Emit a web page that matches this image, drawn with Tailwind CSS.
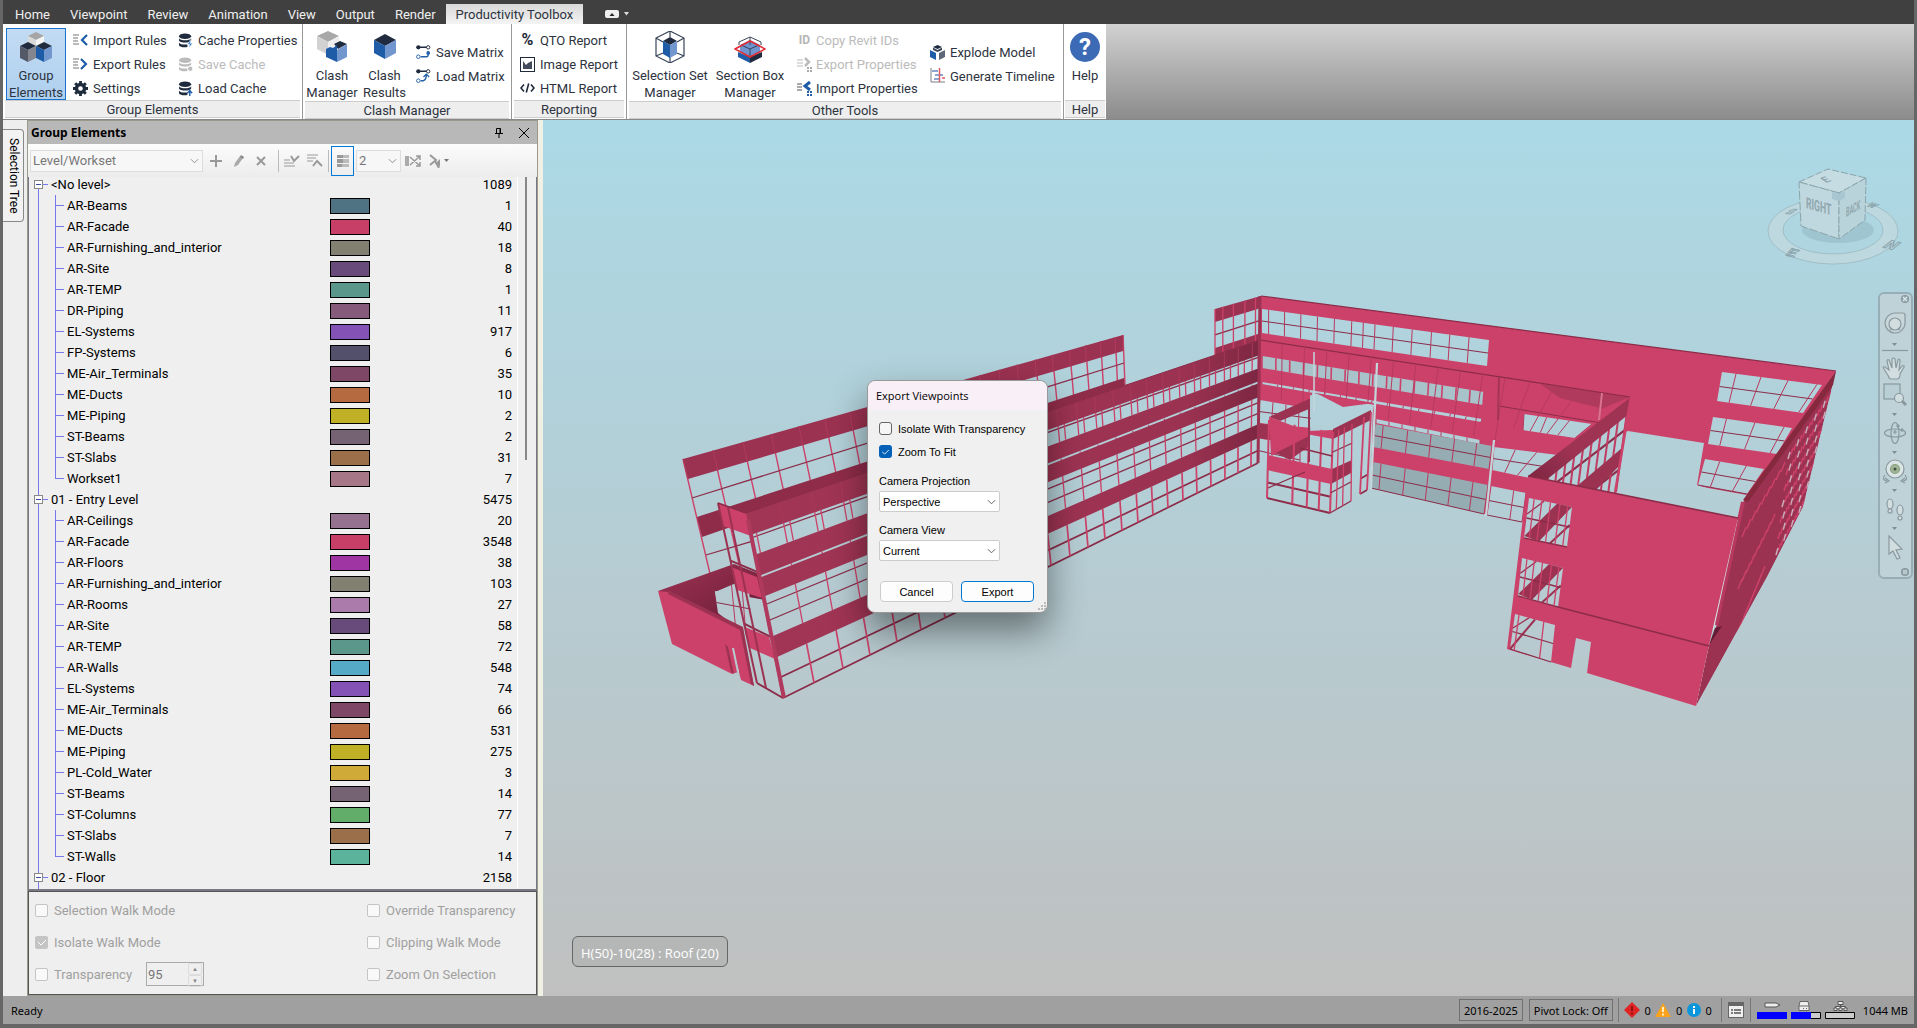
<!DOCTYPE html>
<html lang="en">
<head>
    <meta charset="UTF-8">
    <meta name="viewport" content="width=device-width, initial-scale=1.0">
    <title>Productivity Toolbox</title>
    <script src="https://cdn.jsdelivr.net/npm/@tailwindcss/browser@4"></script>
</head>
<body class="h-screen overflow-hidden flex flex-col bg-[#666] border-x-3 border-b-4 border-[#666] font-[Roboto,sans-serif] text-[13px] leading-[17px] text-[#2d3340]">

    <!-- Shared symbols -->
    <svg class="hidden">
        <symbol id="db" viewBox="0 0 16 16">
            <ellipse cx="7" cy="3.500" rx="6.500" ry="3" />
            <path d="M.5 5.500c1 3 12 3 13 0v2.500c-1 3-12 3-13 0zM.5 10c1 3 8 2.500 9 2v3c-4 .8-8 0-9-2z" />
        </symbol>
        <symbol id="matrix" viewBox="0 0 16 16">
            <path d="M2 3h12" stroke="#1f2a3c" stroke-width="1.500" />
            <circle cx="2.500" cy="3" r="2.300" fill="#1f2a3c" />
            <circle cx="13" cy="3" r="1.800" fill="#fff" stroke="#1f2a3c" />
            <circle cx="2.500" cy="13" r="1.900" fill="#fff" stroke="#2460a8" />
        </symbol>
        <symbol id="chev" viewBox="0 0 10 6">
            <path d="M1 1l4 4 4-4" fill="none" stroke="currentColor" />
        </symbol>
    </svg>

    <!-- Ribbon tabs -->
    <nav class="flex h-6 shrink-0 items-end bg-[#404040] pl-[2px] text-[#f0f0f0]">
        <a href="#" class="h-5 px-[10px] leading-[22px]">Home</a>
        <a href="#" class="h-5 px-[10px] leading-[22px]">Viewpoint</a>
        <a href="#" class="h-5 px-[10px] leading-[22px]">Review</a>
        <a href="#" class="h-5 px-[10px] leading-[22px]">Animation</a>
        <a href="#" class="h-5 px-[10px] leading-[22px]">View</a>
        <a href="#" class="h-5 px-[10px] leading-[22px]">Output</a>
        <a href="#" class="h-5 px-[10px] leading-[22px]">Render</a>
        <a href="#" class="h-5 bg-linear-to-b from-[#d8d8d8] to-[#f4f4f4] px-[10px] leading-[22px] text-[#2d3340]">Productivity Toolbox</a>
        <button class="ml-[22px] flex h-5 items-center gap-[5px]" aria-label="Minimize ribbon">
            <svg class="w-[14px] h-2" viewBox="0 0 14 8"><rect width="14" height="8" rx="2" fill="#eee" /><path d="M4.500 6L7 3l2.500 3z" fill="#222" /></svg>
            <svg class="w-[5px] h-1" viewBox="0 0 5 4"><path d="M0 0h5L2.500 3.500z" fill="#ddd" /></svg>
        </button>
    </nav>

    <!-- Ribbon panels -->
    <header class="flex h-24 shrink-0 bg-linear-to-b from-[#d2d2d2] to-[#8c8c8c] border-b border-[#888]">
        <section class="flex w-[300px] flex-col border-r border-[#999] bg-white">
            <div class="flex flex-1 pl-[3px] pt-1">
                <button class="flex h-[72px] w-[60px] flex-col items-center border border-[#1a73cc] bg-linear-to-b from-[#c3dbf3] to-[#aed0ef]">
                    <svg class="mt-[3px] h-8 w-8 shrink-0" viewBox="0 0 32 32">
                        <path d="M8 4l8-4 8 4-8 4z" fill="#a5a5a5" /><path d="M8 4l8 4v8l-8-4z" fill="#d9d9d9" /><path d="M24 4l-8 4v8l8-4z" fill="#f4f4f4" />
                        <path d="M0 14l8-4 8 4-8 4zM16 14l8-4 8 4-8 4z" fill="#202b3f" />
                        <path d="M0 14l8 4v12l-8-4z" fill="#545968" /><path d="M16 14l-8 4v12l8-4z" fill="#84868f" />
                        <path d="M16 14l8 4v12l-8-4z" fill="#1f5ca8" /><path d="M32 14l-8 4v12l8-4z" fill="#7297cf" />
                    </svg>
                    <span class="mt-[3px]">Group<br>Elements</span>
                </button>
                <div class="ml-[7px] flex w-[105px] flex-col">
                    <button class="flex h-6 items-center gap-[5px]"><svg class="h-[14px] w-[15px]" viewBox="0 0 15 14" fill="none"><path d="M0 2h6M0 5h5M0 8h5M0 11h6" stroke="#777" /><path d="M14 2L9 7l5 5" stroke="#1f5ca8" stroke-width="2.200" /></svg>Import Rules</button>
                    <button class="flex h-6 items-center gap-[5px]"><svg class="h-[14px] w-[15px]" viewBox="0 0 15 14" fill="none"><path d="M0 2h6M0 5h5M0 8h5M0 11h6" stroke="#777" /><path d="M8 2l5 5-5 5" stroke="#1f5ca8" stroke-width="2.200" /></svg>Export Rules</button>
                    <button class="flex h-6 items-center gap-[5px]"><svg class="h-[15px] w-[15px]" viewBox="0 0 16 16"><circle cx="8" cy="8" r="4.300" fill="none" stroke="#1f2a3c" stroke-width="3.600" /><path d="M8 0v3M8 13v3M0 8h3M13 8h3M2.300 2.300l2 2M11.700 11.700l2 2M13.700 2.300l-2 2M2.300 13.700l2-2" stroke="#1f2a3c" stroke-width="3" /></svg>Settings</button>
                </div>
                <div class="flex flex-col">
                    <button class="flex h-6 items-center gap-1"><svg class="h-[15px] w-4" viewBox="0 0 16 16"><use href="#db" fill="#1f2a3c" /><path d="M13 7l-3.500 5H12l-1 4 4-5h-2.500z" fill="#2f78c4" stroke="#fff" stroke-width=".5" /></svg>Cache Properties</button>
                    <button class="flex h-6 items-center gap-1 text-[#bbb]" disabled><svg class="h-[15px] w-4" viewBox="0 0 16 16"><use href="#db" fill="#bbb" /><circle cx="12.500" cy="12.500" r="2.800" fill="#bbb" stroke="#fff" /></svg>Save Cache</button>
                    <button class="flex h-6 items-center gap-1"><svg class="h-[15px] w-4" viewBox="0 0 16 16"><use href="#db" fill="#1f2a3c" /><path d="M12 16v-5M9.500 13l2.500-3 2.500 3" fill="none" stroke="#2460a8" stroke-width="1.500" /></svg>Load Cache</button>
                </div>
            </div>
            <h2 class="mx-[2px] h-[18px] border-y border-[#ccc] bg-[#eee] text-center leading-[17px] mb-[1px]">Group Elements</h2>
        </section>

        <section class="flex w-[209px] flex-col border-r border-[#999] bg-white">
            <div class="flex flex-1 pl-[3px] pt-1">
                <button class="flex w-[52px] flex-col items-center">
                    <svg class="mt-[3px] h-8 w-8 shrink-0" viewBox="0 0 32 32">
                        <path d="M1 5l11-5 11 5-11 6z" fill="#a8a8a8" /><path d="M1 5l11 6v13L1 18z" fill="#d2d2d2" /><path d="M23 5l-11 6v13l6-3v-8l5-3z" fill="#eee" />
                        <path d="M18 13l6-3 7 3-9 5z" fill="#202b3f" /><path d="M10 18l4-2 3 1 4-3v17L10 26z" fill="#1f5ca8" /><path d="M31 13l-10 6v12l10-5z" fill="#7297cf" />
                    </svg>
                    <span class="mt-1">Clash<br>Manager</span>
                </button>
                <button class="flex w-[53px] flex-col items-center">
                    <svg class="mt-[3px] h-8 w-8 shrink-0" viewBox="0 0 32 32"><path d="M5 9l11-6 11 6-11 6z" fill="#202b3f" /><path d="M5 9l11 6v13L5 22z" fill="#1f5ca8" /><path d="M27 9l-11 6v13l11-6z" fill="#7297cf" /></svg>
                    <span class="mt-1">Clash<br>Results</span>
                </button>
                <div class="ml-[5px] flex flex-col pt-3">
                    <button class="flex h-6 items-center gap-[5px]"><svg class="h-4 w-[15px]" viewBox="0 0 16 16"><use href="#matrix" /><path d="M5 13h6a2 2 0 0 0 2-2V8" fill="none" stroke="#2460a8" stroke-width="1.500" /><circle cx="13" cy="9" r="2" fill="#2460a8" /></svg>Save Matrix</button>
                    <button class="flex h-6 items-center gap-[5px]"><svg class="h-4 w-[15px]" viewBox="0 0 16 16"><use href="#matrix" /><path d="M5 13h3q3-1 3-6M8 9l3-3 3 3" fill="none" stroke="#2460a8" stroke-width="1.500" /></svg>Load Matrix</button>
                </div>
            </div>
            <h2 class="mx-[2px] h-[18px] border-y border-[#ccc] bg-[#eee] text-center leading-[17px] mb-[1px]">Clash Manager</h2>
        </section>

        <section class="flex w-[115px] flex-col border-r border-[#999] bg-white">
            <div class="flex flex-1 flex-col pl-[8px] pt-1">
                <button class="flex h-6 items-center gap-[5px]"><span class="w-[15px] text-base font-bold text-[#1f2a3c]">%</span>QTO Report</button>
                <button class="flex h-6 items-center gap-[5px]"><svg class="h-[15px] w-[15px]" viewBox="0 0 15 15"><rect x=".5" y=".5" width="14" height="14" fill="#fff" stroke="#1f2a3c" /><path d="M3 12V4l3 4 2-2 4-2v8z" fill="#444b5a" /></svg>Image Report</button>
                <button class="flex h-6 items-center gap-[5px]"><svg class="h-[10px] w-[15px]" viewBox="0 0 15 10" fill="none" stroke="#1f2a3c" stroke-width="1.600"><path d="M4 1.500L1 5l3 3.500M11 1.500L14 5l-3 3.500M8.700.5l-2.400 9" /></svg>HTML Report</button>
            </div>
            <h2 class="mx-[2px] h-[18px] border-y border-[#ccc] bg-[#eee] text-center leading-[17px] mb-[1px]">Reporting</h2>
        </section>

        <section class="flex w-[437px] flex-col border-r border-[#999] bg-white">
            <div class="flex flex-1 pl-[3px] pt-1">
                <button class="flex w-[80px] flex-col items-center">
                    <svg class="mt-[3px] h-8 w-8 shrink-0" viewBox="0 0 32 32">
                        <path d="M2 7l14-7 14 7v18l-14 7-14-7zM16 0v6M2 7l7 4M30 7l-7 4M2 25l7-3M30 25l-7-3M16 32v-6" fill="none" stroke="#39455a" stroke-width="1.200" />
                        <path d="M9 10l7-4 7 4-7 4z" fill="#202b3f" /><path d="M9 10l7 4v13l-7-4z" fill="#1f5ca8" /><path d="M23 10l-7 4v13l7-4z" fill="#7297cf" />
                    </svg>
                    <span class="mt-1 whitespace-nowrap">Selection Set<br>Manager</span>
                </button>
                <button class="flex w-[80px] flex-col items-center">
                    <svg class="mt-[3px] h-8 w-8 shrink-0" viewBox="0 0 32 32">
                        <path d="M4 21l12 5v6L4 26z" fill="#1f5ca8" /><path d="M28 21l-12 5v6l12-6z" fill="#202b3f" />
                        <path d="M6 14l10-5 10 5v7l-10 5-10-5z" fill="#6f94cf" /><path d="M5 14V11l11-5 11 5v3M16 6v8M16 18v8M7 14l9 4 9-4" fill="none" stroke="#39455a" />
                        <path d="M1 18l15-8 15 8-15 8z" fill="none" stroke="#e02b33" stroke-width="1.600" />
                    </svg>
                    <span class="mt-1 whitespace-nowrap">Section Box<br>Manager</span>
                </button>
                <div class="ml-[7px] flex w-[133px] flex-col">
                    <button class="flex h-6 items-center gap-1 text-[#bbb]" disabled><span class="w-[15px] text-xs font-bold text-[#b5b5b5]">ID</span>Copy Revit IDs</button>
                    <button class="flex h-6 items-center gap-1 text-[#bbb]" disabled><svg class="h-4 w-[15px]" viewBox="0 0 15 16" fill="none"><path d="M0 4h6M0 7h6M0 10h6" stroke="#bbb" /><path d="M8 2l4 4-4 4" stroke="#bbb" stroke-width="2.500" /><path d="M10 12h5M10 15h5" stroke="#aaa" stroke-width="2" stroke-dasharray="2 1" /></svg>Export Properties</button>
                    <button class="flex h-6 items-center gap-1"><svg class="h-4 w-[15px]" viewBox="0 0 15 16" fill="none"><path d="M0 4h5M0 7h5M0 10h5" stroke="#555" /><path d="M13 2L8 6l5 4" stroke="#1f5ca8" stroke-width="3" /><path d="M10 12h5M10 15h5" stroke="#2460a8" stroke-width="2" stroke-dasharray="2 1" /></svg>Import Properties</button>
                </div>
                <div class="flex flex-col pt-3">
                    <button class="flex h-6 items-center gap-[5px]"><svg class="h-4 w-[15px]" viewBox="0 0 15 16"><path d="M3 3l4.500-2L12 3 7.500 5z" fill="#202b3f" /><path d="M3 3.500L7.500 6v2L3 6zM12 3.500L7.500 6v2L12 6z" fill="#39455a" /><path d="M0 6l6 3v7l-6-3z" fill="#1f5ca8" /><path d="M15 6L9 9v7l6-3z" fill="#5f6878" /></svg>Explode Model</button>
                    <button class="flex h-6 items-center gap-[5px]"><svg class="h-4 w-[15px]" viewBox="0 0 15 16" fill="none"><path d="M1 0v14h14" stroke="#7a7f88" /><path d="M2 3h6M5 7h8M4 11h5" stroke="#8ba6d2" stroke-width="2" /><path d="M9.500 0v14M12 10h3" stroke="#dd5b61" stroke-width="1.500" /></svg>Generate Timeline</button>
                </div>
            </div>
            <h2 class="mx-[2px] h-[18px] border-y border-[#ccc] bg-[#eee] text-center leading-[17px] mb-[1px]">Other Tools</h2>
        </section>

        <section class="flex w-[42px] flex-col bg-white">
            <div class="flex flex-1 justify-center pt-1">
                <button class="flex flex-col items-center">
                    <span class="mt-[3px] flex h-8 w-8 items-center justify-center"><span class="h-[30px] w-[30px] rounded-full bg-[#3c6ab4] text-2xl leading-[30px] font-bold text-white">?</span></span>
                    <span class="mt-1">Help</span>
                </button>
            </div>
            <h2 class="mx-[1px] h-[18px] border-y border-[#ccc] bg-[#eee] text-center leading-[17px] mb-[1px]">Help</h2>
        </section>
    </header>

    <main class="flex min-h-0 flex-1">
        <!-- Docked side tab -->
        <div class="w-6 shrink-0 bg-[#eee] pt-[9px]">
            <button class="h-[93px] w-[21px] rounded-r border border-l-0 border-[#888] bg-[#f2f2f2] text-[12px] text-black [writing-mode:vertical-rl]">Selection Tree</button>
        </div>

        <!-- Group Elements panel -->
        <aside class="flex w-[511px] shrink-0 flex-col border border-[#99998c] bg-[#efefef] text-black">
            <div class="flex h-[23px] shrink-0 items-center bg-[#b8b8b8] pl-[3px] pr-2">
                <h1 class="flex-1 font-['Noto_Sans',sans-serif] text-[12px] font-bold">Group Elements</h1>
                <button class="mr-4" aria-label="Pin"><svg class="h-[10px] w-2" viewBox="0 0 8 10" fill="none" stroke="#000"><path d="M1.500 5.500v-5h4v5M0 5.500h8M4 5.500V10M5 .5v5" /></svg></button>
                <button aria-label="Close"><svg class="h-[10px] w-[10px]" viewBox="0 0 10 10" stroke="#000"><path d="M0 0l10 10M10 0L0 10" /></svg></button>
            </div>

            <div class="flex h-[33px] shrink-0 items-center bg-linear-to-b from-[#fcfcfc] to-[#ececec] pl-[2px] text-[#888]">
                <div class="relative">
                    <select aria-label="Grouping" class="h-[22px] w-[173px] appearance-none border border-[#ddd] bg-[#f7f7f7] pl-[2px] text-[#777]"><option>Level/Workset</option></select>
                    <svg class="pointer-events-none absolute right-1 top-2 h-[6px] w-[9px]"><use href="#chev" /></svg>
                </div>
                <div class="flex items-center gap-[11px] pl-[7px] pr-3">
                    <button aria-label="Add"><svg class="h-3 w-3" viewBox="0 0 12 12" stroke="#999" stroke-width="2"><path d="M6 0v12M0 6h12" /></svg></button>
                    <button aria-label="Edit"><svg class="h-3 w-3" viewBox="0 0 12 12"><path d="M7 1l3 2-5 7-4 2 1-4z" fill="#aaa" /><path d="M8 0l3 2-1 2-3-2z" fill="#888" /></svg></button>
                    <button aria-label="Delete"><svg class="h-[10px] w-[10px]" viewBox="0 0 10 10" stroke="#999" stroke-width="2"><path d="M1 1l8 8M9 1L1 9" /></svg></button>
                </div>
                <div class="flex items-center gap-[7px] border-x border-[#bbb] py-[3px] px-[5px]">
                    <button aria-label="Expand"><svg class="h-4 w-4" viewBox="0 0 16 16" fill="none" stroke="#999"><path d="M0 7h6M0 10h10M0 13h11" /><path d="M7 3l3 5 5-5" stroke-width="2" /></svg></button>
                    <button aria-label="Collapse"><svg class="h-4 w-4" viewBox="0 0 16 16" fill="none" stroke="#999"><path d="M0 2h11M0 5h9M0 8h6" /><path d="M6 13l4-5 5 5" stroke-width="2" /></svg></button>
                </div>
                <button aria-label="Color table" class="ml-[2px] flex h-[30px] w-[23px] items-center justify-center border border-[#0078d7]"><svg class="h-3 w-3" viewBox="0 0 12 12"><path d="M0 0h12v3H0zM0 4h12v4H0zM0 9h12v3H0z" fill="#bbb" /><path d="M0 0h6v3H0zM0 4h6v4H0zM0 9h5v3H0z" fill="#999" /></svg></button>
                <div class="relative ml-[2px]">
                    <select aria-label="Level depth" class="h-[22px] w-[45px] appearance-none border border-[#ddd] bg-[#f7f7f7] pl-[2px] text-[#777]"><option>2</option></select>
                    <svg class="pointer-events-none absolute right-1 top-2 h-[6px] w-[9px]"><use href="#chev" /></svg>
                </div>
                <button aria-label="Shuffle" class="ml-1"><svg class="h-3 w-4" viewBox="0 0 16 12" fill="none" stroke="#999"><path d="M5 2l9 8M5 10l9-8M11 1h4v4M11 11h4V7" stroke-width="1.500" /><path d="M0 1h4v3H0zM0 8h4v3H0zM0 4h4v4H0z" fill="#aaa" stroke="none" /></svg></button>
                <button aria-label="Reset" class="ml-2 flex items-center gap-[3px]"><svg class="h-[14px] w-3" viewBox="0 0 12 14"><path d="M1 1l6 5-6 5M6 7l4 7" fill="none" stroke="#999" stroke-width="2" /><path d="M11 5v8l-4-4z" fill="#999" /></svg><svg class="h-[3px] w-[5px]" viewBox="0 0 5 3"><path d="M0 0h5L2.500 3z" fill="#777" /></svg></button>
            </div>

            <div class="flex min-h-0 flex-1 overflow-hidden border-x border-b-2 border-[#777785]">
                <ul id="tree" class="relative flex-1 border-r border-white"></ul>
                <div class="w-[18px]"><div class="ml-[7px] h-[283px] w-[2px] bg-[#888]"></div></div>
            </div>

            <form class="grid h-[104px] shrink-0 grid-cols-[332px_1fr] grid-rows-3 items-center border border-[#555] pb-1 pt-[2px] pl-[6px] text-[#a0a0a0]">
                <label class="flex items-center gap-[6px]"><input type="checkbox" disabled class="h-[13px] w-[13px] appearance-none rounded-xs border border-[#c4c4c4] bg-[#f9f9f9]">Selection Walk Mode</label>
                <label class="flex items-center gap-[6px]"><input type="checkbox" disabled class="h-[13px] w-[13px] appearance-none rounded-xs border border-[#c4c4c4] bg-[#f9f9f9]">Override Transparency</label>
                <label class="relative flex items-center gap-[6px]"><input type="checkbox" checked disabled class="h-[13px] w-[13px] appearance-none rounded-xs bg-[#c4c4c4]"><svg class="absolute left-[3px] h-[7px] w-2" viewBox="0 0 8 7"><path d="M0 3l3 3 5-5" fill="none" stroke="#fff" /></svg>Isolate Walk Mode</label>
                <label class="flex items-center gap-[6px]"><input type="checkbox" disabled class="h-[13px] w-[13px] appearance-none rounded-xs border border-[#c4c4c4] bg-[#f9f9f9]">Clipping Walk Mode</label>
                <div class="flex items-center">
                    <label class="flex w-[111px] items-center gap-[6px]"><input type="checkbox" disabled class="h-[13px] w-[13px] appearance-none rounded-xs border border-[#c4c4c4] bg-[#f9f9f9]">Transparency</label>
                    <div class="flex h-6 w-[58px] border border-[#aaa] pr-[1px]">
                        <input type="text" value="95" disabled aria-label="Transparency value" class="w-[41px] pl-[1px] text-[#777]">
                        <div class="flex flex-1 flex-col text-[6px] leading-[10px] text-[#888]">
                            <button type="button" class="flex-1 rounded-xs border border-[#ddd]" aria-label="Increase">▲</button>
                            <button type="button" class="flex-1 rounded-xs border border-[#ddd]" aria-label="Decrease">▼</button>
                        </div>
                    </div>
                </div>
                <label class="flex items-center gap-[6px]"><input type="checkbox" disabled class="h-[13px] w-[13px] appearance-none rounded-xs border border-[#c4c4c4] bg-[#f9f9f9]">Zoom On Selection</label>
            </form>
        </aside>
        <div class="w-[5px] shrink-0 bg-[#f1f0e4]"></div>

        <!-- 3D view -->
        <div class="relative min-w-0 flex-1 overflow-hidden bg-linear-to-b from-[#abd9e6] to-[#c0c0c0]">
            <svg id="model" class="absolute inset-0 h-full w-full" viewBox="543 120 1371 876" preserveAspectRatio="xMinYMin slice">
                <defs>
                    <linearGradient id="sky" gradientUnits="userSpaceOnUse" x1="0" y1="120" x2="0" y2="996"><stop stop-color="#abd9e6" /><stop offset="1" stop-color="#c0c0c0" /></linearGradient>
                    <linearGradient id="shade" x1="0" y1="1" x2="1" y2="0"><stop stop-color="#7c2541" /><stop offset="0.400" stop-color="#9f3354" /></linearGradient>
                    <linearGradient id="deep" x1="0" y1="0" x2="1" y2="1"><stop stop-color="#a03354" /><stop offset="1" stop-color="#641b35" /></linearGradient>
                    <linearGradient id="long" x1="0" y1="0" x2="1" y2="0"><stop stop-color="#a13555" /><stop offset="0.850" stop-color="#9c3252" /><stop offset="1" stop-color="#7d2742" /></linearGradient>
                    <clipPath id="outer"><path d="M1836 371L1803 507L1767 577L1696 706L1709 645L1716 627L1743 502z" /></clipPath>
                </defs>
                <rect x="543" y="120" width="1371" height="876" fill="url(#sky)" />
                <g id="building"></g>

                <!-- View cube -->
                <g stroke="#8ba5ad" fill="#bed8df">
                    <path fill-rule="evenodd" d="M1768 231a65 33 0 1 0 130 0a65 33 0 1 0-130 0zM1783 230a50 24 0 1 0 100 0a50 24 0 1 0-100 0z" stroke-opacity=".5" />
                    <ellipse cx="1838" cy="230" rx="36" ry="13" fill="#8fb4bf" stroke="none" opacity=".5" />
                    <path d="M1799 182l29-13 38 9-27 15z" fill="#c5dce2" stroke-dasharray="7 2" />
                    <path d="M1799 182l40 11v46l-38-13z" fill="#bfd8df" stroke-dasharray="9 2" />
                    <path d="M1866 178l-27 15v46l26-19z" fill="#b9d3da" stroke-dasharray="7 2" />
                    <path d="M1832 192l7 2 6-3v7l-6 3-7-2z" fill="#a7c6d1" stroke="none" />
                    <g fill="#91a6ae" stroke="none" font-family="Roboto" font-weight="bold" font-size="14">
                        <text transform="matrix(.62 .18 0 1.100 1806 208)">RIGHT</text>
                        <text transform="matrix(.42 -.24 0 1 1846 217)" font-size="13">BACK</text>
                        <text transform="matrix(.8 -.3 .7 .5 1826 183)" font-size="13">E</text>
                        <text transform="matrix(1.100 .3 -.6 .7 1785 255)" fill="#bed8df" stroke="#8ba5ad">E</text>
                        <text transform="matrix(1.100 .3 -.9 .7 1882 247)" fill="#bed8df" stroke="#8ba5ad">N</text>
                        <text transform="matrix(.9 0 -.7 .5 1784 214)" fill="#bed8df" stroke="#8ba5ad">S</text>
                        <text transform="matrix(.7 .2 -.7 .4 1866 206)" fill="#bed8df" stroke="#8ba5ad" font-size="12">W</text>
                    </g>
                </g>
            </svg>

            <!-- Navigation bar -->
            <div class="absolute right-[1px] top-[172px] flex w-[35px] flex-col items-center rounded-md border-2 border-[#98aeb6] bg-[#bfd2d8] h-[287px]">
                <svg class="w-[31px] h-[283px]" viewBox="1881 294 31 283" fill="#d2dde0" stroke="#8999a0" stroke-width="1.200">
                    <g><circle cx="1906" cy="299" r="3.500" fill="#94a7ae" /><path d="M1904 297l4 4M1908 297l-4 4" stroke="#dde6e9" /></g>
                    <path d="M1896 313h8q2 0 2 2v9a10 10 0 1 1-10-11z" fill="#c8d5d9" /><circle cx="1896" cy="324" r="6" /><path d="M1891 330l2-2M1901 330l-2-2" />
                    <path d="M1883 350.500h26" />
                    <path d="M1890 377l-5-8q-2-3 1-2l4 3-2-9q0-2 2-1l3 8v-9q1-2 3 0l1 9 2-8q2-2 2 1l-1 9 3-4q3-1 2 1l-4 7q0 5-3 5h-6q-3-1-2-2z" />
                    <rect x="1885" y="384" width="16" height="15" fill="#b8cfd6" /><circle cx="1900" cy="398" r="4.500" /><path d="M1903 401l4 4" stroke-width="3" />
                    <g fill="none"><ellipse cx="1896" cy="433" rx="10.500" ry="4" /><ellipse cx="1896" cy="433" rx="4" ry="10.500" /><path d="M1896 430v4M1894 432h4M1899 424v4M1897 426h4M1903 428v4M1901 430h4" /></g>
                    <path d="M1886 475q-4 5 2 6M1906 475q4 5-2 6M1886 478l4 3-4 2M1906 478l-4 3 4 2" fill="none" /><circle cx="1896" cy="469" r="9" fill="#dce5e6" /><circle cx="1896" cy="469" r="4.500" fill="#a0b494" stroke="#8aa283" /><circle cx="1896" cy="469" r="1.500" fill="#435247" stroke="none" />
                    <ellipse cx="1891" cy="504" rx="3" ry="5" /><circle cx="1891" cy="511" r="2" /><ellipse cx="1901" cy="510" rx="3" ry="5" /><circle cx="1901" cy="518" r="2" />
                    <path d="M1890 536v18l4-3 4 8 3-1-4-8 6-1z" />
                    <path d="M1893 343h5l-2.500 3zM1893 413h5l-2.500 3zM1893 451h5l-2.500 3zM1893 489h5l-2.500 3zM1893 527h5l-2.500 3z" fill="#7d8e95" stroke="none" />
                    <circle cx="1906" cy="572" r="3.500" fill="#94a7ae" /><path d="M1904 571h4M1904 573h4" stroke="#dde6e9" />
                </svg>
            </div>

            <p class="absolute bottom-[29px] left-[29px] rounded-md border border-[#666] bg-[#b5b7b7] px-2 pb-[4px] pt-2 font-['Open_Sans',sans-serif] text-white">H(50)-10(28) : Roof (20)</p>

            <!-- Export dialog -->
            <div role="dialog" aria-labelledby="dlg-title" class="absolute left-[324px] top-[260px] w-[181px] overflow-visible rounded-lg border border-[#999] bg-[#f0f0f0] font-['Liberation_Sans',Arial,sans-serif] text-[11px] leading-4 text-black shadow-[0_18px_36px_rgba(0,0,0,0.45)]">
                <h2 id="dlg-title" class="rounded-t-lg bg-[#f9eff7] px-2 pb-[6px] pt-[7px] font-['Open_Sans',sans-serif]">Export Viewpoints</h2>
                <form class="px-[11px] pb-[10px] pt-[10px]">
                    <label class="flex h-[17px] items-center gap-[6px]"><input type="checkbox" class="h-[13px] w-[13px] appearance-none rounded-[3px] border border-[#666] bg-[#f6f6f6]">Isolate With Transparency</label>
                    <label class="relative mt-[6px] flex h-[17px] items-center gap-[6px]"><input type="checkbox" checked class="h-[13px] w-[13px] appearance-none rounded-[3px] bg-[#0560b8]"><svg class="absolute left-[3px] h-[6px] w-[7px]" viewBox="0 0 8 7"><path d="M0 3l3 3 5-5" fill="none" stroke="#fff" /></svg>Zoom To Fit</label>
                    <label for="proj" class="mt-[13px] block">Camera Projection</label>
                    <div class="relative mt-[2px] w-[121px]">
                        <select id="proj" class="block h-[21px] w-full appearance-none rounded-xs border border-[#ccc] bg-white pl-[3px]"><option>Perspective</option></select>
                        <svg class="pointer-events-none absolute right-1 top-2 h-[6px] w-[9px] text-[#555]"><use href="#chev" /></svg>
                    </div>
                    <label for="view" class="mt-[10px] block">Camera View</label>
                    <div class="relative mt-[2px] w-[121px]">
                        <select id="view" class="block h-[21px] w-full appearance-none rounded-xs border border-[#ccc] bg-white pl-[3px]"><option>Current</option></select>
                        <svg class="pointer-events-none absolute right-1 top-2 h-[6px] w-[9px] text-[#555]"><use href="#chev" /></svg>
                    </div>
                    <div class="mt-5 flex gap-2 pl-[1px]">
                        <button type="button" class="h-[21px] w-[73px] rounded border border-[#ccc] bg-[#fdfdfd]">Cancel</button>
                        <button type="button" class="h-[21px] w-[73px] rounded border border-[#0078d4] bg-[#fdfdfd]">Export</button>
                    </div>
                </form>
                <svg class="absolute bottom-[1px] right-[1px] h-[9px] w-[9px]" viewBox="0 0 9 9"><path d="M7 0h2v2H7zM4 3h2v2H4zM7 3h2v2H7zM1 6h2v2H1zM4 6h2v2H4zM7 6h2v2H7z" fill="#bbb" /></svg>
            </div>
        </div>
    </main>

    <!-- Status bar -->
    <footer class="flex h-7 shrink-0 items-center bg-[#a0a0a0] pl-2 pr-[6px] font-['Noto_Sans',sans-serif] text-[11px] text-black">
        <span class="flex-1">Ready</span>
        <span class="flex h-[22px] w-16 items-center justify-center whitespace-nowrap border border-[#707070]">2016-2025</span>
        <span class="ml-[6px] flex h-[22px] w-[84px] items-center justify-center whitespace-nowrap border border-[#707070]">Pivot Lock: Off</span>
        <div class="ml-[5px] flex h-6 w-[104px] items-center justify-between border-x border-[#777] pl-[5px] pr-[9px]">
            <svg class="h-4 w-4" viewBox="0 0 16 16"><path d="M8 0l8 8-8 8-8-8z" fill="#e02424" /><path d="M8 4v5M8 10.500v2" stroke="#8d1313" stroke-width="2" /></svg><span>0</span>
            <svg class="h-[14px] w-4" viewBox="0 0 16 14"><path d="M8 0l8 14H0z" fill="#faa21b" /><path d="M8 4v5M8 10.500v2" stroke="#fff0c0" stroke-width="2" /></svg><span>0</span>
            <svg class="h-[14px] w-[14px]" viewBox="0 0 14 14"><circle cx="7" cy="7" r="7" fill="#0b96dc" /><path d="M7 6v5M7 3v2" stroke="#fff" stroke-width="2" /></svg><span>0</span>
        </div>
        <button class="flex h-6 w-[29px] items-center justify-center border-r border-[#777]" aria-label="Sheet browser"><svg class="h-4 w-4" viewBox="0 0 16 16"><rect x=".5" y=".5" width="15" height="15" fill="#f0f0f0" stroke="#666" /><path d="M0 0h16v4H0z" fill="#666" /><path d="M3 8h2M6 8h7M3 11h2M6 11h7" stroke="#555" stroke-width="1.500" /></svg></button>
        <div class="ml-[6px] flex gap-1">
            <svg class="h-[18px] w-[30px]" viewBox="0 0 30 18"><path d="M8 2h11l4 2-4 2H8z" fill="#eee" stroke="#555" /><path d="M0 11h30v7H0z" fill="#00f" /></svg>
            <svg class="h-[18px] w-[30px]" viewBox="0 0 30 18"><path d="M9 .5h8l1 4v5H8v-5z" fill="#eee" stroke="#666" /><path d="M8 5h10M12 7.500h1M15 7.500h1" stroke="#666" /><path d="M.5 11.500h29v6H.5z" fill="#ccc" stroke="#000" /><path d="M0 11h20v7H0z" fill="#00f" /></svg>
            <svg class="h-[18px] w-[30px]" viewBox="0 0 30 18"><path d="M13 .5h5v3h-5zM9 7h3v2.500H9zM14 7h3v2.500h-3zM19 7h3v2.500h-3zM15.500 4v3M10.500 7V5.500h10V7" fill="#eee" stroke="#555" /><path d="M.5 11.500h29v6H.5z" fill="#ccc" stroke="#000" /></svg>
        </div>
        <span class="ml-2 whitespace-nowrap">1044 MB</span>
    </footer>

    <script>
        // Tree data: [level name, count, [[group, color, count], ...]]
        const levels = [
            ["<No level>", 1089, [["AR-Beams", "#4f7382", 1], ["AR-Facade", "#c73e66", 40], ["AR-Furnishing_and_interior", "#828071", 18], ["AR-Site", "#684a7b", 8], ["AR-TEMP", "#5b978b", 1], ["DR-Piping", "#855a7a", 11], ["EL-Systems", "#8452b5", 917], ["FP-Systems", "#53506b", 6], ["ME-Air_Terminals", "#7f4766", 35], ["ME-Ducts", "#b56a3f", 10], ["ME-Piping", "#bfb026", 2], ["ST-Beams", "#756273", 2], ["ST-Slabs", "#9b6f49", 31], ["Workset1", "#a67887", 7]]],
            ["01 - Entry Level", 5475, [["AR-Ceilings", "#957390", 20], ["AR-Facade", "#c73e66", 3548], ["AR-Floors", "#9f35a3", 38], ["AR-Furnishing_and_interior", "#828071", 103], ["AR-Rooms", "#ab7bac", 27], ["AR-Site", "#684a7b", 58], ["AR-TEMP", "#5b978b", 72], ["AR-Walls", "#55aac7", 548], ["EL-Systems", "#8452b5", 74], ["ME-Air_Terminals", "#7f4766", 66], ["ME-Ducts", "#b56a3f", 531], ["ME-Piping", "#bfb026", 275], ["PL-Cold_Water", "#d0aa39", 3], ["ST-Beams", "#756273", 14], ["ST-Columns", "#63ad6a", 77], ["ST-Slabs", "#9b6f49", 7], ["ST-Walls", "#5ab39a", 14]]],
            ["02 - Floor", 2158, []]
        ];

        document.getElementById("tree").innerHTML = levels.map(([name, total, groups]) => `
            <li class="relative">
                <span class="absolute left-[9px] top-[6px] bottom-[-6px] w-px bg-[#7777ee]"></span>
                <div class="relative -top-[3px] flex h-[21px] items-center pl-[5px] pr-[5px]">
                    <button class="flex h-[9px] w-[9px] items-center justify-center border border-[#888] bg-white" aria-label="Collapse"><span class="h-px w-[5px] bg-[#3a4aa0]"></span></button>
                    <span class="h-px w-[5px] bg-[#7777ee]"></span>
                    <span class="ml-[3px] flex-1">${name.replace("<", "&lt;").replace(">", "&gt;")}</span><span>${total}</span>
                </div>
                <ul>${groups.map(([group, color, count], i) => `
                    <li class="relative -top-[3px] grid h-[21px] grid-cols-[273px_40px_1fr] items-center pl-[28px] pr-[5px]">
                        <span class="absolute left-[26px] top-0 w-px bg-[#7777ee] ${i === groups.length - 1 ? "h-[10px]" : "h-[21px]"}"></span>
                        <span class="absolute left-[26px] top-[10px] h-px w-[9px] bg-[#7777ee]"></span>
                        <span class="pl-[10px]">${group}</span>
                        <span class="h-4 border border-black" style="background-color:${color}"></span>
                        <span class="text-right">${count}</span>
                    </li>`).join("")}
                </ul>
            </li>`).join("");

        // Building model
        const BRIGHT = "#cc4169", DARK = "#9c3252", EDGE = "#8b2c49", SKY = "url(#sky)";
        let out = "";
        const lerp = (a, b, t) => [a[0] + (b[0] - a[0]) * t, a[1] + (b[1] - a[1]) * t];
        const poly = (pts, fill) => { out += `<path d="M${pts.map(p => p.join(" ")).join("L")}z" fill="${fill}"/>`; };
        const line = (a, b, color, w = 1.3) => { out += `<path d="M${a.join(" ")}L${b.join(" ")}" stroke="${color}" stroke-width="${w}"/>`; };
        // quad is [top left, top right, bottom right, bottom left]
        const bars = (q, cols, rows, vcolor = BRIGHT, hcolor = EDGE, w = 1.3) => {
            rows.forEach(s => line(lerp(q[0], q[3], s), lerp(q[1], q[2], s), hcolor, w));
            cols.forEach(t => line(lerp(q[0], q[1], t), lerp(q[3], q[2], t), vcolor, w));
        };
        const pane = (q, cols, rows, fill = SKY, vcolor = "#b8385e", w = 1) => { poly(q, fill); bars(q, cols, rows, vcolor, EDGE, w); };
        const even = n => Array.from({ length: n + 1 }, (_, i) => i / n);

        // Back wall of the left wing
        const backCols = [130, 220, 310, 395, 478, 556, 630, 700, 768, 834, 898, 960, 1020, 1078, 1133, 1187, 1238, 1290, 1338, 1383, 1427, 1450].map(x => (x - 130) / 1320);
        bars([[683, 459], [1123, 335], [1125, 386], [711, 578]], backCols, [], BRIGHT, EDGE, 1.4);
        poly([[683, 459], [1123, 335], [1123, 351], [688, 479]], DARK);
        poly([[697, 517], [1124, 378], [1125, 390], [702, 537]], "#8f2c4a");
        line([692, 498], [1124, 363], EDGE);
        line([706, 555], [800, 527], EDGE);
        bars([[683, 459], [1123, 335], [1123, 351], [688, 479]], backCols, [], "#ad3a5d", EDGE, 1);

        // Low block at the left end
        poly([[658, 591], [734, 564], [762, 575], [765, 600], [715, 591], [719, 613], [742, 628]], "url(#deep)");
        pane([[715, 592], [748, 578], [753, 640], [718, 613]], [0.5, 0.8], [0.5]);
        poly([[658, 591], [668, 592], [742, 628], [754, 686], [741, 680], [733, 649], [738, 672], [732, 674], [672, 644]], BRIGHT);
        poly([[668, 590], [743, 627], [754, 686], [751, 684], [740, 630], [668, 594]], DARK);
        poly([[725, 644], [728, 647], [734, 674], [731, 672]], DARK);
        line([733, 648], [738, 672], SKY, 2);

        // Back wall of the right wing
        poly([[1261, 296], [1836, 371], [1745, 500], [1697, 485], [1704, 443], [1628, 431], [1600, 440], [1261, 350]], BRIGHT);
        line([1261, 296], [1836, 371], EDGE, 1.2);
        pane([[1262, 309], [1489, 340], [1487, 366], [1262, 333]], [265, 313, 362, 412, 463, 515, 550, 585, 640, 697, 755, 810, 868].map(x => (x - 245) / 683), [0.5]);
        pane([[1722, 372], [1822, 385], [1803, 413], [1717, 401]], [0.14, 0.39, 0.66, 0.95], [0.5]);
        pane([[1713, 417], [1792, 428], [1777, 454], [1708, 444]], [0.17, 0.53, 0.9], [0.5]);
        pane([[1705, 459], [1764, 469], [1747, 494], [1698, 485]], [0.25, 0.7], [0.5, 1]);
        poly([[1697, 486], [1747, 495], [1744, 503], [1697, 490]], SKY);

        // Return wall at the inner corner
        poly([[1215, 309], [1261, 296], [1261, 308], [1215, 322]], DARK);
        poly([[1215, 348], [1261, 333], [1261, 341], [1215, 356]], DARK);
        bars([[1215, 309], [1261, 296], [1261, 340], [1215, 356]], [0, 0.17, 0.4, 0.65, 0.88, 1], [0.55]);

        // Courtyard facade
        poly([[1260, 340], [1630, 397], [1600, 425], [1530, 478], [1522, 522], [1371, 488], [1373, 405], [1310, 395], [1310, 438], [1258, 440]], BRIGHT);
        poly([[1540, 384], [1630, 397], [1596, 411], [1600, 408], [1560, 398]], "#b03a5d");
        line([1260, 340], [1630, 397], EDGE, 1.2);
        pane([[1262, 356], [1484, 392], [1483, 405], [1262, 368]], even(16), [], "#a9c3cb", BRIGHT, 1.6);
        pane([[1262, 382], [1482, 419], [1481, 422], [1262, 384]], even(14), [], SKY);
        pane([[1260, 400], [1312, 409], [1312, 428], [1258, 423]], even(4), [0.5]);
        pane([[1258, 438], [1300, 448], [1300, 472], [1258, 463]], even(3), [0.5]);
        poly([[1258, 423], [1300, 430], [1300, 445], [1258, 438]], DARK);
        pane([[1524, 414], [1592, 424], [1575, 438], [1523, 430]], even(3), []);
        pane([[1376, 419], [1480, 440], [1480, 444], [1376, 423]], even(8), []);
        pane([[1375, 424], [1492, 446], [1489, 469], [1373, 447]], [0, 0.07, 0.28, 0.48, 0.68, 0.87, 1], [0.5], "#95acb2");
        pane([[1494, 447], [1558, 455], [1530, 478], [1492, 470]], even(3), [0.5]);
        pane([[1373, 462], [1488, 485], [1484, 514], [1371, 488]], [0, 0.07, 0.28, 0.48, 0.68, 0.87, 1], [0.5, 1], "#95acb2");
        pane([[1491, 486], [1526, 493], [1522, 522], [1487, 515]], [0, 0.65, 1], [0.5, 1]);
        bars([[1260, 340], [1505, 378], [1495, 440], [1260, 396]], even(11), [], "#b7395f", EDGE, 1);
        bars([[1505, 378], [1630, 397], [1580, 440], [1497, 425]], [0.2, 0.4, 0.6], [0.6], "#b7395f", EDGE, 1);
        poly([[1312, 393], [1374, 405], [1371, 420], [1333, 432], [1310, 432]], SKY);
        poly([[1316, 393], [1374, 403], [1343, 407]], BRIGHT);
        line([1314, 352], [1314, 412], "#c5d6db", 1.5);
        line([1377, 363], [1371, 489], "#c5d6db", 2.2);
        line([1499, 377], [1498, 420], "#a33556", 2);
        line([1494, 440], [1486, 516], "#c5d6db", 2.2);
        line([1602, 393], [1599, 420], "#d87390", 2);

        // Long facade of the left wing, from the end tower to the inner corner
        const L = y => [746 + (y - 513) / 5, y];
        const R = y => [1260 - (y - 340) / 60, y];
        const strip = (a, b, c, d) => [L(a), R(c), R(d), L(b)];
        const longCols = [783, 814, 843, 870, 897, 921, 945, 967, 989, 1010, 1031, 1051, 1070, 1088, 1105, 1122, 1138, 1153, 1168, 1183, 1197, 1211, 1225, 1238, 1251, 1258].map(x => (x - 783) / 475);
        poly(strip(535, 698, 355, 463), SKY);
        bars(strip(535, 555, 355, 368), longCols.concat(longCols.slice(0, -1).map(t => t + 0.012)), [0.15]);
        bars(strip(576, 578, 382, 383), longCols, []);
        bars(strip(597, 637, 397, 424), longCols, [0.2, 0.6]);
        bars(strip(658, 698, 438, 463), longCols, [0.5, 1], BRIGHT, EDGE, 1.7);
        poly(strip(513, 535, 340, 355), "url(#long)");
        poly(strip(555, 576, 368, 381), "url(#long)");
        poly(strip(578, 597, 383, 397), "url(#long)");
        poly(strip(637, 658, 424, 438), "url(#long)");
        bars(strip(513, 535, 340, 355), longCols, [], "#a83859", EDGE, 1);
        line([746, 513], [1260, 340], EDGE, 1);
        line([1260, 296], [1258, 463], DARK, 3);

        // End tower
        poly([[718, 503], [746, 513], [751, 536], [723, 526]], BRIGHT);
        poly([[731, 567], [757, 577], [762, 598], [737, 590]], BRIGHT);
        poly([[745, 627], [769, 637], [775, 659], [750, 648]], BRIGHT);
        bars([[718, 503], [746, 513], [783, 698], [757, 683]], [0, 0.35], [0.32, 0.67, 1], DARK, EDGE, 2);
        line([748, 520], [784, 698], "#b03a5e", 4);
        line([718, 503], [746, 513], EDGE, 1.5);

        // Entrance rotunda
        poly([[1269, 417], [1309, 399], [1309, 409], [1280, 421]], DARK);
        poly([[1269, 417], [1307, 431], [1333, 430], [1333, 439], [1306, 434], [1309, 450], [1271, 455]], BRIGHT);
        poly([[1276, 453], [1309, 436], [1309, 446], [1290, 460]], DARK);
        poly([[1333, 429], [1371, 410], [1371, 420], [1333, 439]], DARK);
        poly([[1268, 455], [1332, 469], [1331, 484], [1267, 470]], BRIGHT);
        poly([[1332, 469], [1352, 460], [1351, 473], [1331, 484]], DARK);
        bars([[1269, 420], [1333, 432], [1330, 513], [1267, 498]], [0, 0.4, 0.63, 0.82, 1], [0.8, 1], BRIGHT, EDGE, 2);
        line([1300, 448], [1332, 456], EDGE);
        line([1268, 488], [1305, 472], EDGE);
        bars([[1333, 432], [1352, 424], [1351, 501], [1330, 513]], [0.3, 0.6, 1], [0.25, 0.75, 1]);
        bars([[1364, 417], [1371, 412], [1367, 490], [1360, 494]], [0, 1], [0.8, 1], BRIGHT, EDGE, 1.8);
        line([1309, 399], [1309, 462], DARK, 2);

        // Inner side wall of the near block
        poly([[1540, 480], [1626, 415], [1616, 492]], SKY);
        bars([[1540, 478], [1627, 412], [1616, 492], [1530, 560]], [0.1, 0.2, 0.3, 0.4, 0.5, 0.6, 0.7, 0.8, 0.9, 1], [0.23, 0.72], "#c03c63", EDGE, 2);
        poly([[1631, 397], [1528, 476], [1545, 481], [1629, 414]], "url(#shade)");
        poly([[1622, 448], [1577, 486], [1596, 490], [1619, 466]], DARK);
        line([1631, 397], [1615, 493], BRIGHT, 2.5);

        // Outer right wall, far half is a dense grid of small windows
        out += `<g clip-path="url(#outer)">`;
        poly([[1836, 371], [1803, 507], [1767, 577], [1696, 706], [1709, 645], [1716, 627], [1743, 502]], DARK);
        for (let row = 0; row < 11; row++) {
            for (let i = 0; i < 16; i++) {
                const a = lerp([1834 - row * 3, 388 + row * 15], [1790 - row * 2, 452 + row * 16], i / 15);
                line(a, [a[0] - 2, a[1] + 7], (i + row) % 3 ? BRIGHT : "#c8aebb", 1.5);
            }
        }
        for (let row = 0; row < 3; row++) {
            for (let i = 0; i < 9; i++) {
                const a = lerp([1785 - row * 10, 462 + row * 52], [1746 - row * 4, 527 + row * 52], i / 8);
                line(a, [a[0] - 4, a[1] + 10], BRIGHT, 1.4);
            }
        }
        out += `</g>`;
        poly([[1836, 371], [1743, 500], [1748, 502], [1833, 385]], "#86293f");
        line([1743, 502], [1716, 625], "#b8395f", 4);
        line([1737, 520], [1713, 630], "#d3dfe3", 1.4);
        poly([[1715, 628], [1722, 626], [1709, 645]], "#641b35");

        // Near block
        poly([[1528, 476], [1738, 518], [1709, 645], [1696, 706], [1587, 673], [1591, 642], [1576, 638], [1571, 668], [1507, 649]], BRIGHT);
        line([1528, 476], [1738, 518], EDGE, 1.6);
        line([1558, 607], [1709, 646], EDGE, 1.5);
        [
            [[1529, 498], [1572, 507], [1567, 547], [1524, 538]],
            [[1522, 558], [1563, 568], [1558, 607], [1518, 596]],
            [[1515, 614], [1555, 625], [1551, 662], [1510, 649]]
        ].forEach((q, i) => {
            poly(q, SKY);
            if (i < 2) poly([lerp(q[0], q[3], 0.95), lerp(q[0], q[1], 0.65), q[1], lerp(q[3], q[2], 0.35)], DARK);
            line(lerp(q[0], q[3], 0.4), lerp(q[0], q[1], 0.35), DARK);
            if (i < 2) line(lerp(q[3], q[2], 0.6), lerp(q[1], q[2], 0.45), DARK, 2);
            else line(q[3], lerp(q[0], q[1], 0.5), DARK, 2);
            bars(q, i < 2 ? [0.12, 0.3, 0.5, 0.72, 0.9] : [0.1, 0.72], [0.5, 1]);
        });
        document.getElementById("building").innerHTML = out;
    </script>
</body>
</html>
